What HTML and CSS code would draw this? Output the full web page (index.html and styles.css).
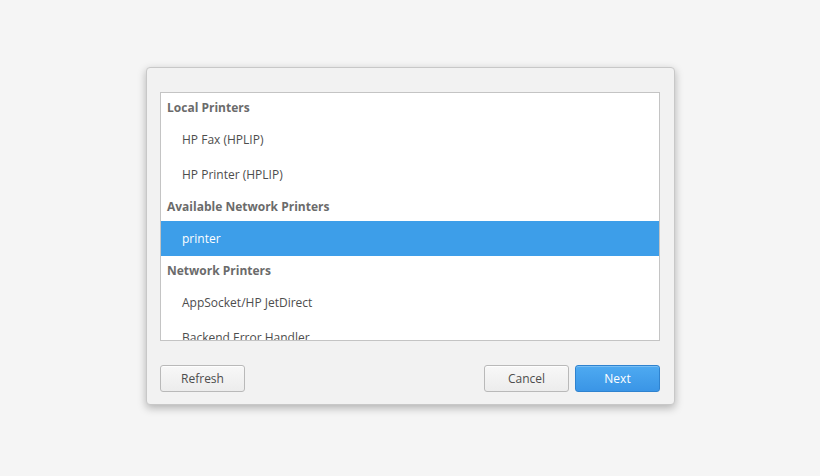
FILE: index.html
```
<!DOCTYPE html>
<html>
<head>
<meta charset="utf-8">
<link rel="stylesheet" href="styles.css">
</head>
<body>
<div class="dialog">
  <div class="list">
    <div class="header">Local Printers</div>
    <div class="item">HP Fax (HPLIP)</div>
    <div class="item">HP Printer (HPLIP)</div>
    <div class="header">Available Network Printers</div>
    <div class="item selected">printer</div>
    <div class="header">Network Printers</div>
    <div class="item">AppSocket/HP JetDirect</div>
    <div class="item">Backend Error Handler</div>
  </div>
  <div class="actions">
    <button class="btn">Refresh</button>
    <div class="spacer"></div>
    <button class="btn">Cancel</button>
    <button class="btn primary">Next</button>
  </div>
</div>
</body>
</html>
```
FILE: styles.css
```
html, body {
  margin: 0;
  padding: 0;
  background: #f5f5f5;
  width: 820px;
  height: 476px;
  overflow: hidden;
  font-family: "Open Sans", "Noto Sans", sans-serif;
  font-size: 12px;
}
body {
  display: flex;
  justify-content: flex-start;
  padding-top: 67px;
  padding-left: 146px;
  box-sizing: border-box;
}
.dialog {
  width: 529px;
  height: 338px;
  box-sizing: border-box;
  background: #f2f2f2;
  border: 1px solid #c8c8c8;
  border-radius: 4px;
  box-shadow: 0 3px 8px rgba(0,0,0,0.28);
  padding: 24px 14px 12px 13px;
  display: flex;
  flex-direction: column;
}
.list {
  height: 249px;
  flex: none;
  box-sizing: border-box;
  border: 1px solid #c4c4c4;
  background: #fff;
  overflow: hidden;
}
.header {
  height: 29px;
  line-height: 29px;
  padding-left: 6px;
  font-weight: bold;
  color: #6b6b6b;
}
.item {
  height: 35px;
  line-height: 35px;
  padding-left: 21px;
  color: #4d4d4d;
}
.item.selected {
  background: #3d9ee9;
  color: #fff;
}
.actions {
  display: flex;
  align-items: center;
  margin-top: 24px;
  gap: 6px;
}
.spacer { flex: 1; }
.btn {
  width: 85px;
  height: 27px;
  box-sizing: border-box;
  font-family: inherit;
  font-size: 12px;
  color: #4d4d4d;
  border: 1px solid #b9b9b9;
  border-radius: 3px;
  background: linear-gradient(#f8f8f8, #ececec);
  box-shadow: inset 0 1px 0 rgba(255,255,255,0.8);
  padding: 0;
}
.btn.primary {
  color: #fff;
  border-color: #2f83cf;
  background: linear-gradient(#4eaaf1, #3a95e6);
  box-shadow: inset 0 1px 0 rgba(255,255,255,0.25);
}
```
